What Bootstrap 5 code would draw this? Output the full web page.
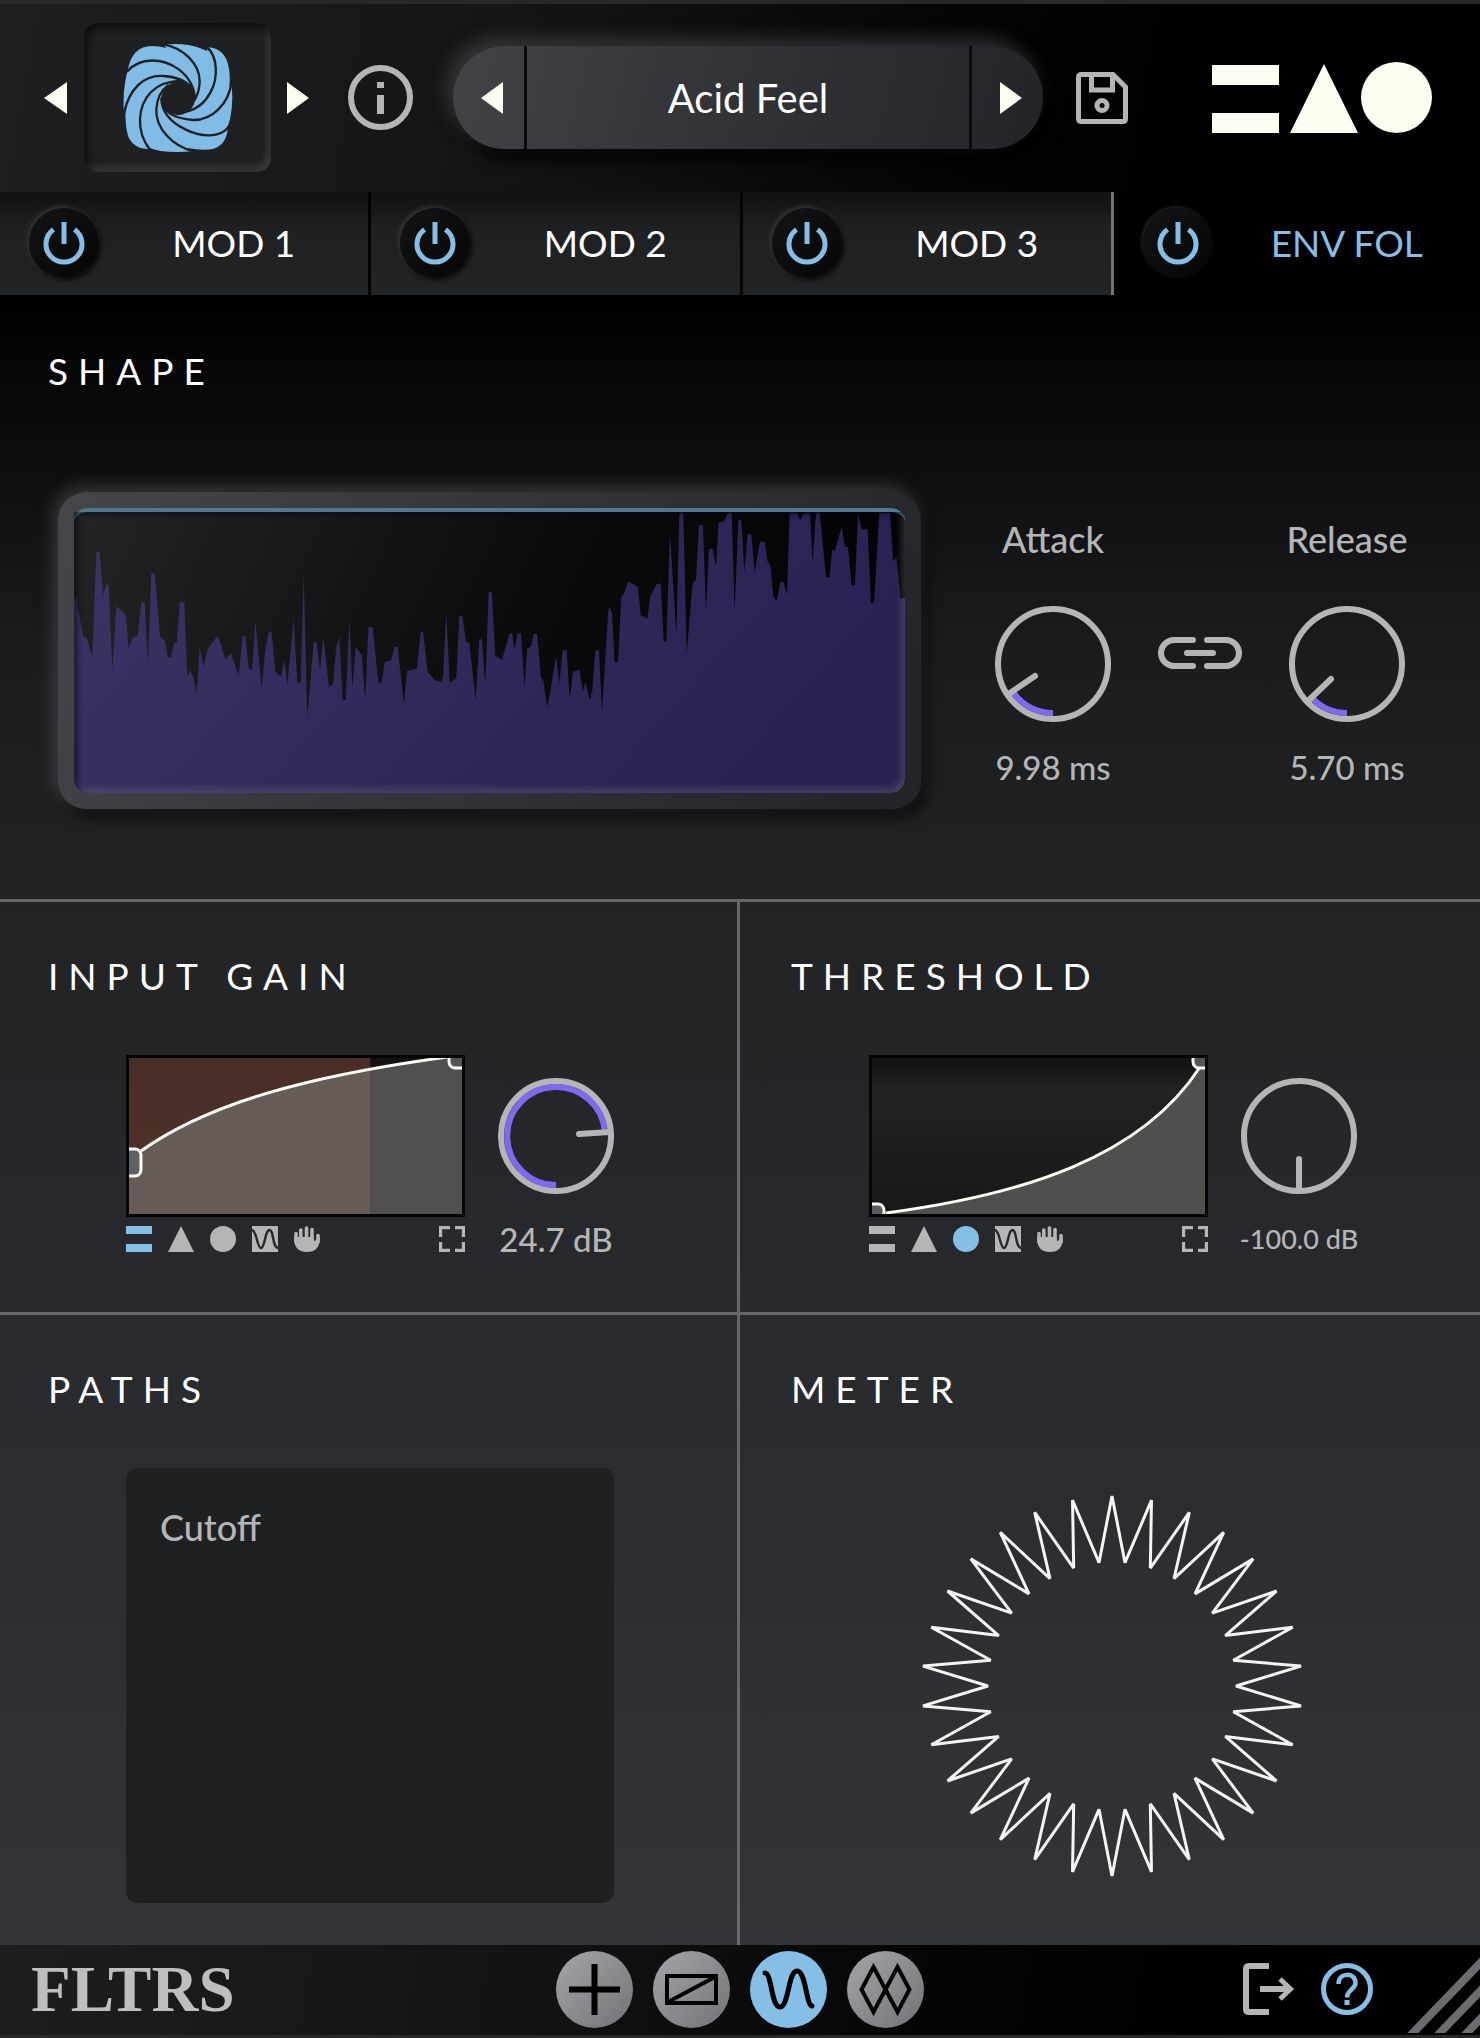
<!DOCTYPE html>
<html lang="en" data-bs-theme="dark">
<head>
<meta charset="utf-8">
<meta name="viewport" content="width=device-width, initial-scale=1">
<title>FLTRS – Acid Feel</title>
<link href="https://cdn.jsdelivr.net/npm/bootstrap@5.3.0/dist/css/bootstrap.min.css" rel="stylesheet">
<style>
  :root { --sky: #85bfe6; --ivory: #fdfef2; --grey: #b4b5b7; --rule: #66676a; --violet: #7d6af0; }
  body { font-family: Lato, "Open Sans", sans-serif; background: #000; color: #fff; }
  button { background: none; border: 0; padding: 0; color: inherit; }
  svg { display: block; }
  .plugin { border-top: 4px solid #28282a; border-bottom: 4px solid #28282a; }

  .topbar { height: 188px; padding: 0 48px 1px 44px; background: linear-gradient(100deg, #1e1f21 0, #131415 35%, #040404 65%, #000 85%); }
  .emblem { width: 187px; height: 149px; margin: 0 16px 0 17px; border-radius: 14px; background: #1e2022;
    box-shadow: inset 3px 4px 8px #0c0c0d, inset -4px -5px 6px #3a3b3d; }
  .info-btn { margin: 0 40px 0 39px; }
  .preset { height: 103px; border-radius: 52px; overflow: hidden; background: linear-gradient(105deg, #424346, #313235 50%, #232427); }
  .preset-wrap { border-radius: 52px; box-shadow: -6px -8px 18px rgba(120,122,126,.34), 8px 10px 18px #000; }
  .preset-name { font-size: 40px; line-height: 46px; border: solid #0b0b0c; border-width: 0 3px; }
  .preset-step { width: 71px; }
  .save-btn { margin: 0 84px 0 33px; }

  .tabs { height: 103px; background: #000; }
  .mod-tab { flex: 0 0 25.1%; padding-bottom: 2px; background: linear-gradient(#101112, #1f2022 35%, #222325); border-right: 3px solid #000; }
  .mod-tab:nth-child(3) { border-right-color: #727376; }
  .mod-tab.current { flex: 1 1 0; background: #000; border: 0; color: var(--sky); }
  .power { width: 70px; height: 70px; margin-left: 29px; border-radius: 50%; color: var(--sky);
    background: linear-gradient(135deg, #131415, #050505); box-shadow: -2px -2px 4px #333436, 2px 2px 4px #08080a; }
  .current .power { box-shadow: -2px -2px 3px #1c1d1f; }
  .mod-name { font-size: 37px; line-height: 46px; }

  .panels { background: linear-gradient(#000 0, #0b0b0c 8%, #1b1c1e 22%, #222325 38%, #28292c 60%, #333438 100%); }
  .pane { padding: 51px 0 0; }
  .pane-title { font-size: 37px; line-height: 46px; letter-spacing: 10px; margin: 0 0 56px 48px; font-weight: 400; }
  .shape-pane { border-bottom: 3px solid var(--rule); padding: 53px 0 90px; }
  .shape-pane .pane-title { margin-bottom: 98px; }
  .split > .pane:first-child { border-right: 3px solid var(--rule); }
  .split > .pane:last-child { padding-left: 3px; }
  .split.ruled { border-bottom: 3px solid var(--rule); }

  .shape-row { padding: 0 68px 0 58px; }
  .scope { height: 317px; padding: 16px; border-radius: 28px; margin-right: 67px; background: linear-gradient(115deg, #454649, #333438 50%, #222326);
    box-shadow: -5px -6px 16px rgba(110,112,116,.4), 6px 8px 14px #0c0d0e; }
  .scope-screen { height: 285px; border-radius: 14px; overflow: hidden; background: linear-gradient(115deg, #242425, #0c0c0d 50%, #000); border-top: 4px solid #4f798d; }
  .scope-shade { inset: 20px 16px 16px; border-radius: 0 0 14px 14px; box-shadow: inset 4px 3px 5px rgba(5,8,15,.5), inset -4px -5px 6px rgba(120,118,135,.35); }
  .scope-screen svg { width: 100%; height: 281px; }
  .dials { gap: 40px; padding-top: 27px; }
  .dial { width: 130px; }
  .dial svg { margin: 47px auto 25px; }
  .dial-text { font-size: 33px; line-height: 40px; font-weight: 500; color: var(--grey); white-space: nowrap; }
  .dial-text.caption-lg { font-size: 36px; }
  .dial-text.tight { font-size: 27px; }

  .curve-grid { display: grid; grid-template-columns: 1fr 116px; column-gap: 33px; row-gap: 9px; margin: 0 123px 60px 126px; align-items: center; justify-items: center; }
  .curve { width: 100%; height: 162px; border: 3px solid #050506; background: linear-gradient(#111, #232323 20%, #171717); }
  .curve svg { width: 100%; height: 156px; }
  .curve-tools { height: 26px; gap: 16px; color: var(--grey); }
  .curve-tools .on { color: var(--sky); }
  .readout { height: 26px; line-height: 26px; }

  .path-list { height: 435px; margin: 0 123px 42px 126px; padding: 39px 34px; border-radius: 12px; background: #1f2022; }
  .meter-title { margin-bottom: 82px; }

  .footbar { height: 90px; padding-bottom: 2px; background: linear-gradient(100deg, #1d1e20 0, #121314 35%, #040404 65%, #000 85%); }
  .side { flex: 1 1 0; }
  .side > button { align-self: center; }
  .help-btn { margin: 0 33px 0 26px; }
  .wordmark { display: block; margin-left: 31px; font-family: "Liberation Serif", serif; font-weight: 700; font-size: 65px; line-height: 62px; color: #bdbec0; }
  .page-btn { width: 77px; height: 77px; border-radius: 50%; color: #000; background: linear-gradient(135deg, #a5a6a9, #717275); }
  .page-btn.on { background: var(--sky); }
  .pages { gap: 20px; }
</style>
</head>
<body>
<svg class="d-none" aria-hidden="true">
  <symbol id="power" viewBox="0 0 44 44"><path d="M11.500 8.500A18 18 0 1 0 32.500 8.500M22 1V23" fill="none" stroke="currentColor" stroke-width="5"/></symbol>
  <symbol id="bars" viewBox="0 0 26 26"><path d="M0 0h26v8H0zM0 18h26v8H0z" fill="currentColor"/></symbol>
  <symbol id="tri" viewBox="0 0 26 26"><path d="M13 0 26 26H0z" fill="currentColor"/></symbol>
  <symbol id="disc" viewBox="0 0 26 26"><circle cx="13" cy="13" r="13" fill="currentColor"/></symbol>
  <symbol id="wave" viewBox="0 0 26 26"><path d="M0 0h26v26H0z" fill="currentColor"/><path d="M0 4C5 5 5 22 9 22S13 4 17.500 4 20 21 26 22" fill="none" stroke="#27282b" stroke-width="2.400"/></symbol>
  <symbol id="hand" viewBox="0 0 26 26"><g stroke="currentColor" stroke-width="3.600" stroke-linecap="round" fill="none"><path d="M2 7.500V16M6.800 4V16M12.500 2V16M18 3.500V16M24 9.500V16"/></g><path d="M.2 13C.2 22 5 26 13 26S25.800 22 25.800 12C23 12 22 15 20 15L19.500 11H.2z" fill="currentColor"/></symbol>
  <symbol id="expand" viewBox="0 0 26 26"><path d="M1.500 11V1.500H11M16 1.500h8.500V11M24.500 16v8.500H16M11 24.500H1.500V16" fill="none" stroke="currentColor" stroke-width="3.400"/></symbol>
</svg>

<main class="plugin">
  <header class="topbar d-flex align-items-center">
    <button type="button" aria-label="Previous effect"><svg width="23" height="32"><path d="M23 0v32L0 16z" fill="#fdfef2"/></svg></button>
    <div class="emblem d-flex align-items-center justify-content-center">
      <svg width="110" height="110" viewBox="128 67 330 328">
        <path fill="#80bce6" d="M142 150C150 100 175 75 215 75Q235 75 258 81L250 71Q290 66 325 72Q355 77 381 90L378 79Q420 78 438 115Q452 150 447 196L453 185Q460 240 450 290Q446 310 436 328L443 318Q440 370 400 383Q370 390 318 380L340 390Q290 396 240 390Q215 385 194 375L207 384Q160 385 143 345Q133 310 136 264L131 278Q127 220 135 180Q138 160 142 150Z"/>
        <path fill="#1e2022" d="M345 232C343 262 318 284 290 282C262 278 243 258 242 230C248 200 270 180 300 179C325 182 342 205 345 232Z"/>
        <g fill="none" stroke="#1e2022" stroke-width="7">
          <path d="M140 152C180 105 250 112 295 145C325 167 342 195 344 235"/>
          <path d="M131 278C145 205 190 160 250 165C290 168 318 180 334 200"/>
          <path d="M209 386C165 330 172 255 212 213C237 188 268 180 305 179"/>
          <path d="M340 391C275 375 225 320 228 265C230 230 242 208 265 191"/>
          <path d="M445 318C420 350 365 350 315 325C270 303 243 270 243 230"/>
          <path d="M454 183C445 250 395 297 340 297C295 294 262 280 248 255"/>
          <path d="M379 78C412 105 415 170 390 215C375 243 350 265 318 272"/>
          <path d="M248 70C310 80 358 130 358 180C358 203 352 222 342 238"/>
        </g>
      </svg>
    </div>
    <button type="button" aria-label="Next effect"><svg width="22" height="32"><path d="M0 0v32l22-16z" fill="#fdfef2"/></svg></button>
    <button type="button" class="info-btn" aria-label="Information"><svg width="65" height="65"><circle cx="32.500" cy="32.500" r="29.500" fill="none" stroke="#b4b5b7" stroke-width="6"/><path d="M29 17h7v6h-7zM29 30h7v19h-7z" fill="#b4b5b7"/></svg></button>
    <div class="preset-wrap flex-grow-1">
      <div class="preset d-flex">
        <button type="button" class="preset-step d-flex align-items-center ps-4" aria-label="Previous preset"><svg class="ms-1" width="22" height="32"><path d="M22 0v32L0 16z" fill="#fdfef2"/></svg></button>
        <button type="button" class="preset-name flex-grow-1">Acid Feel</button>
        <button type="button" class="preset-step d-flex align-items-center ps-4" aria-label="Next preset"><svg class="ms-1" width="22" height="32"><path d="M0 0v32l22-16z" fill="#fdfef2"/></svg></button>
      </div>
    </div>
    <button type="button" class="save-btn" aria-label="Save preset"><svg width="52" height="52" fill="none" stroke="#b4b5b7" stroke-width="5"><path d="M5.500 2.500H37L49.500 15V46.500Q49.500 49.500 46.500 49.500H5.500Q2.500 49.500 2.500 46.500V5.500Q2.500 2.500 5.500 2.500Z"/><path d="M15.500 3V18H36.500V3"/><circle cx="26" cy="33.500" r="5"/></svg></button>
    <svg width="220" height="72" fill="#fdfef2" role="img" aria-label="EAO"><path d="M0 3h67v20H0zM0 51h67v20H0zM112 2l34 69H78z"/><circle cx="184.500" cy="35.500" r="35.500"/></svg>
  </header>

  <nav class="tabs d-flex" aria-label="Modulators">
    <div class="mod-tab d-flex align-items-center"><button type="button" class="power d-flex align-items-center justify-content-center" aria-label="Mod 1 power"><svg width="44" height="44"><use href="#power"/></svg></button><button type="button" class="mod-name flex-grow-1">MOD 1</button></div>
    <div class="mod-tab d-flex align-items-center"><button type="button" class="power d-flex align-items-center justify-content-center" aria-label="Mod 2 power"><svg width="44" height="44"><use href="#power"/></svg></button><button type="button" class="mod-name flex-grow-1">MOD 2</button></div>
    <div class="mod-tab d-flex align-items-center"><button type="button" class="power d-flex align-items-center justify-content-center" aria-label="Mod 3 power"><svg width="44" height="44"><use href="#power"/></svg></button><button type="button" class="mod-name flex-grow-1">MOD 3</button></div>
    <div class="mod-tab current d-flex align-items-center"><button type="button" class="power d-flex align-items-center justify-content-center" aria-label="Envelope follower power"><svg width="44" height="44"><use href="#power"/></svg></button><button type="button" class="mod-name flex-grow-1">ENV FOL</button></div>
  </nav>

  <div class="panels">
    <section class="pane shape-pane">
      <h2 class="pane-title">SHAPE</h2>
      <div class="shape-row d-flex">
        <div class="scope flex-grow-1 position-relative">
          <div class="scope-screen">
            <svg viewBox="102 126 2493 843" preserveAspectRatio="none" aria-label="Envelope">
              <defs><linearGradient id="wf" x1="0" y1="0" x2="1" y2=".3"><stop offset="0" stop-color="#3e3366"/><stop offset=".5" stop-color="#33295a"/><stop offset="1" stop-color="#2a2051"/></linearGradient></defs>
              <path fill="url(#wf)" d="M102 969V382L108 385 130 500 139 502 157 561 169 245H179L189 375 198 345 206 343 217 600 229 408 257 435 266 535 278 502 293 497 304 397H314L324 582 334 310H344L360 500 374 510 383 560 392 565 402 520 411 516 419 397H433L442 620 450 600 459 620 470 670 479 532 490 590 504 535 533 497 545 530 556 568 573 550 596 618 608 497H616L626 595 636 600 646 452 665 655 675 550 685 487H695L706 605 723 621 733 570 742 645 761 447 772 638H782L791 315 802 742 821 517H830L840 600 850 500 867 650 879 643 889 530 898 500 908 690H917L928 447 937 655 947 532 965 555 976 690 985 472H998L1015 638H1025L1034 576 1053 570 1064 530H1073L1092 705 1101 603 1131 597 1142 485H1149L1163 605 1184 630 1204 635 1209 620 1219 427 1229 638 1249 625 1258 438H1267L1278 515 1288 520 1307 690 1318 508H1326L1336 645 1346 366H1355L1366 557 1386 570 1408 492 1416 490 1424 540 1433 490H1443L1453 650 1462 535 1473 530 1481 492H1491L1503 625 1510 630 1521 710 1531 665 1548 558 1558 640 1568 541H1580L1589 688 1599 605 1618 600 1629 665 1636 635 1649 690 1657 660 1666 541H1677L1686 725 1705 418 1709 412 1716 430 1724 577H1734L1744 380 1752 372 1764 335 1794 350 1802 435 1822 446 1831 378 1850 343 1862 340 1871 514H1879L1890 190 1909 495 1918 128H1930L1940 550 1958 340 1968 330 1977 165H1989L1998 425 2007 236H2018L2028 290 2036 158 2052 154 2064 128H2075L2084 425 2095 150H2104L2113 307 2123 193H2134L2144 305 2160 215H2174L2183 275 2191 285 2200 380 2210 393 2221 336H2231L2241 375 2249 128H2271L2280 150 2290 132 2310 128 2318 280 2328 128H2339L2349 230 2358 322H2368L2377 238 2385 242 2405 170 2415 230 2424 232 2435 345H2445L2454 130 2464 178H2483L2493 399H2502L2518 128H2550L2560 275 2569 260 2581 385H2595V969Z"/>
            </svg>
          </div>
          <div class="scope-shade position-absolute"></div>
        </div>
        <div class="dials d-flex align-items-center align-self-start">
          <div class="dial text-center position-relative">
            <label class="dial-text caption-lg d-block" for="attack">Attack</label>
            <input type="range" class="visually-hidden" id="attack" min="0" max="50" value="10">
            <svg width="116" height="116" fill="none" stroke-width="6"><path d="M58 107A49 49 0 0 1 17.500 85.500" stroke="#7d6af0"/><circle cx="58" cy="58" r="55" stroke="#b4b5b7"/><path d="M15 87 40 70" stroke="#b4b5b7" stroke-linecap="round"/></svg>
            <output class="dial-text d-block" for="attack">9.98 ms</output>
          </div>
          <button type="button" aria-label="Link attack and release"><svg width="84" height="32" fill="none" stroke="#b4b5b7" stroke-width="6" stroke-linecap="round"><path d="M35 3H16A13 13 0 0 0 16 29H35M49 3H68A13 13 0 0 1 68 29H49M29 16H55"/></svg></button>
          <div class="dial text-center position-relative">
            <label class="dial-text caption-lg d-block" for="release">Release</label>
            <input type="range" class="visually-hidden" id="release" min="0" max="50" value="6">
            <svg width="116" height="116" fill="none" stroke-width="6"><path d="M58 107A49 49 0 0 1 23 92" stroke="#7d6af0"/><circle cx="58" cy="58" r="55" stroke="#b4b5b7"/><path d="M20 94 42 73" stroke="#b4b5b7" stroke-linecap="round"/></svg>
            <output class="dial-text d-block" for="release">5.70 ms</output>
          </div>
        </div>
      </div>
    </section>

    <div class="split ruled row g-0">
      <section class="pane col-6">
        <h2 class="pane-title">INPUT GAIN</h2>
        <div class="curve-grid">
          <div class="curve">
            <svg viewBox="0 0 334 156" preserveAspectRatio="none">
              <defs><linearGradient id="rg" x1="0" y1="0" x2="0" y2="1"><stop offset="0" stop-color="#4a2d26"/><stop offset="1" stop-color="#4e342c"/></linearGradient></defs>
              <path fill="#505050" d="M0 93H12C80 45 180 18 319-1H334V156H0z"/>
              <path fill="url(#rg)" d="M0 0H242V156H0z"/>
              <path fill="#675b57" d="M0 93H12C80 45 160 24 242 11V156H0z"/>
              <g stroke="#fdfdf5" stroke-width="3"><path fill="none" d="M12 93C80 45 180 18 319-1"/><rect x="-14" y="91" width="26" height="27" rx="6" fill="#5f6163"/><rect x="321" y="-16" width="26" height="26" rx="6" fill="#555"/></g>
            </svg>
          </div>
          <div class="position-relative">
            <input type="range" class="visually-hidden" id="gain" min="-100" max="36" value="25" aria-label="Input gain">
            <svg width="116" height="116" fill="none" stroke-width="6"><path d="M58 107A49 49 0 1 1 107 54" stroke="#7d6af0"/><circle cx="58" cy="58" r="55" stroke="#b4b5b7"/><path d="M112 54 81 56" stroke="#b4b5b7" stroke-linecap="round"/></svg>
          </div>
          <div class="curve-tools d-flex w-100">
            <button type="button" class="on" aria-label="Linear"><svg width="26" height="26"><use href="#bars"/></svg></button>
            <button type="button" aria-label="Triangle"><svg width="26" height="26"><use href="#tri"/></svg></button>
            <button type="button" aria-label="Round"><svg width="26" height="26"><use href="#disc"/></svg></button>
            <button type="button" aria-label="Wave"><svg width="26" height="26"><use href="#wave"/></svg></button>
            <button type="button" aria-label="Free hand"><svg width="26" height="26"><use href="#hand"/></svg></button>
            <button type="button" class="ms-auto" aria-label="Expand"><svg width="26" height="26"><use href="#expand"/></svg></button>
          </div>
          <output class="dial-text readout" for="gain">24.7 dB</output>
        </div>
      </section>
      <section class="pane col-6">
        <h2 class="pane-title">THRESHOLD</h2>
        <div class="curve-grid">
          <div class="curve">
            <svg viewBox="0 0 334 156" preserveAspectRatio="none">
              <path fill="#4f4f4e" d="M0 156H14C150 137 270 100 329 9H334V156z"/>
              <g stroke="#fdfdf5" stroke-width="3"><path fill="none" d="M14 155C150 137 270 100 329 9"/><rect x="-14" y="146" width="26" height="27" rx="6" fill="#5a5b5d"/><rect x="322" y="-16" width="26" height="26" rx="6" fill="#555"/></g>
            </svg>
          </div>
          <div class="position-relative">
            <input type="range" class="visually-hidden" id="threshold" min="-100" max="0" value="-100" aria-label="Threshold">
            <svg width="116" height="116" fill="none" stroke-width="6" stroke="#b4b5b7"><circle cx="58" cy="58" r="55"/><path d="M58 112V81" stroke-linecap="round"/></svg>
          </div>
          <div class="curve-tools d-flex w-100">
            <button type="button" aria-label="Linear"><svg width="26" height="26"><use href="#bars"/></svg></button>
            <button type="button" aria-label="Triangle"><svg width="26" height="26"><use href="#tri"/></svg></button>
            <button type="button" class="on" aria-label="Round"><svg width="26" height="26"><use href="#disc"/></svg></button>
            <button type="button" aria-label="Wave"><svg width="26" height="26"><use href="#wave"/></svg></button>
            <button type="button" aria-label="Free hand"><svg width="26" height="26"><use href="#hand"/></svg></button>
            <button type="button" class="ms-auto" aria-label="Expand"><svg width="26" height="26"><use href="#expand"/></svg></button>
          </div>
          <output class="dial-text tight readout" for="threshold">-100.0 dB</output>
        </div>
      </section>
    </div>

    <div class="split row g-0">
      <section class="pane col-6">
        <h2 class="pane-title">PATHS</h2>
        <div class="path-list"><div class="dial-text caption-lg">Cutoff</div></div>
      </section>
      <section class="pane col-6">
        <h2 class="pane-title meter-title">METER</h2>
        <svg class="mx-auto" width="384" height="384" viewBox="-192 -192 384 384" role="img" aria-label="Level meter"><polygon id="burst" fill="none" stroke="#f4f4f4" stroke-width="3" stroke-linejoin="bevel"/></svg>
      </section>
    </div>
  </div>

  <footer class="footbar d-flex align-items-center">
    <div class="side"><span class="wordmark">FLTRS</span></div>
    <div class="pages d-flex">
      <button type="button" class="page-btn" aria-label="Add"><svg width="77" height="77" stroke="#000" stroke-width="6"><path d="M38.500 13V64M13 38.500H64"/></svg></button>
      <button type="button" class="page-btn" aria-label="Filter"><svg width="77" height="77" fill="none" stroke="#000" stroke-width="4"><path d="M14 25H63V52H14zM15 51 62 26"/></svg></button>
      <button type="button" class="page-btn on" aria-label="Modulation"><svg width="77" height="77" fill="none" stroke="#000" stroke-width="5" stroke-linecap="round"><path d="M15 22C22 22 21 56 30 56S38 20 47 20 56 54 62 55"/></svg></button>
      <button type="button" class="page-btn" aria-label="Matrix"><svg width="77" height="77" fill="none" stroke="#000" stroke-width="4"><path d="M26.500 16 38.500 38.500 26.500 61 14.500 38.500zM50.500 16 62.500 38.500 50.500 61 38.500 38.500z"/></svg></button>
    </div>
    <div class="side d-flex justify-content-end">
      <button type="button" aria-label="Exit"><svg width="52" height="52" fill="none" stroke="#b4b5b7" stroke-width="6"><path d="M26 3H6Q3 3 3 6V46Q3 49 6 49H26M17 26H47"/><path d="M37 16 47.500 26 37 36" stroke-width="5"/></svg></button>
      <button type="button" class="help-btn" aria-label="Help"><svg width="52" height="52" fill="none" stroke="#85bfe6"><circle cx="26" cy="26" r="23.500" stroke-width="5"/><path d="M17.500 21C17.500 9 34.500 9 34.500 20 34.500 26 26 27 26 34.500" stroke-width="4.500"/><path d="M23.500 37h5v5h-5z" fill="#85bfe6" stroke="none"/></svg></button>
      <svg class="align-self-end" width="74" height="88" stroke="#6b6c6f" stroke-width="8"><path d="M2 93 78 14M29 93 78 42M56 93 78 70"/></svg>
    </div>
  </footer>
</main>
<script src="https://cdn.jsdelivr.net/npm/bootstrap@5.3.0/dist/js/bootstrap.bundle.min.js"></script>
<script>
  // Meter outline: 30 spikes alternating between outer and inner radius
  const pts = [];
  for (let i = 0; i < 60; i++) {
    const r = i % 2 ? 124 : 190, a = i * Math.PI / 30;
    pts.push((r * Math.sin(a)).toFixed(1) + ',' + (-r * Math.cos(a)).toFixed(1));
  }
  document.getElementById('burst').setAttribute('points', pts.join(' '));
</script>
</body>
</html>
